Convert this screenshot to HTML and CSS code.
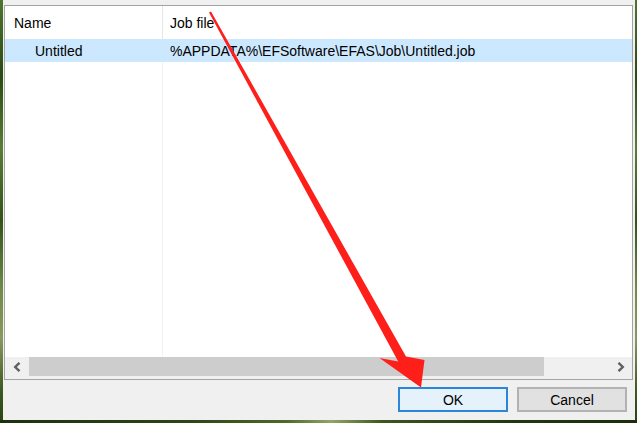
FILE: index.html
```html
<!DOCTYPE html>
<html>
<head>
<meta charset="utf-8">
<title>Jobs</title>
<link rel="stylesheet" href="styles.css">
</head>
<body>
<div class="dialog">
  <div class="list">
    <div class="header">
      <div class="cell name-col hname">Name</div>
      <div class="cell job-col">Job file</div>
    </div>
    <div class="row selected">
      <div class="cell name-col rname">Untitled</div>
      <div class="cell job-col">%APPDATA%\EFSoftware\EFAS\Job\Untitled.job</div>
    </div>
    <div class="rest">
      <div class="name-col"></div>
      <div class="job-col"></div>
    </div>
    <div class="hscroll">
      <div class="sbtn"><svg width="9" height="10" viewBox="0 0 9 10"><polyline points="6.5,0.8 2.2,5 6.5,9.2" fill="none" stroke="#606060" stroke-width="2.4"/></svg></div>
      <div class="track"><div class="thumb"></div></div>
      <div class="sbtn"><svg width="9" height="10" viewBox="0 0 9 10"><polyline points="2.5,0.8 6.8,5 2.5,9.2" fill="none" stroke="#606060" stroke-width="2.4"/></svg></div>
    </div>
  </div>
  <div class="footer">
    <button class="btn default">OK</button>
    <button class="btn">Cancel</button>
  </div>
</div>
<svg class="annot" width="637" height="423" viewBox="0 0 637 423">
  <polygon fill="#fe1f1a" points="211,11.4 406,356.6 424.5,360 421,387.5 379.5,358 398.2,361.4 209,12.6"/>
</svg>
</body>
</html>
```

FILE: styles.css
```css
html, body {
  margin: 0;
  padding: 0;
}
body {
  width: 637px;
  height: 423px;
  overflow: hidden;
  position: relative;
  font-family: "Liberation Sans", Arial, sans-serif;
  font-size: 14px;
  color: #000;
  background:
    linear-gradient(90deg, #1d300e 0%, #2c4616 30%, #4d6a2a 45%, #94a468 52%, #3b5620 60%, #22370f 80%, #1b2d0c 100%) bottom / 100% 3px no-repeat,
    linear-gradient(180deg, #4f7430 0%, #2c4a14 18%, #5a7d36 35%, #34521a 52%, #6f8a48 68%, #8a9860 80%, #3e5a22 92%, #2a4214 100%);
}
.dialog {
  box-sizing: border-box;
  width: 632px;
  height: 420px;
  margin-left: 3px;
  background: #f0f0f0;
  padding: 5px 2px 0 1px;
  display: flex;
  flex-direction: column;
}
.list {
  box-sizing: border-box;
  height: 375px;
  border: 1px solid #a3a3a3;
  background: #fff;
  display: flex;
  flex-direction: column;
}
.header, .row, .rest {
  display: flex;
}
.header {
  height: 33px;
  align-items: center;
}
.row {
  height: 23px;
  align-items: center;
}
.selected {
  background: #cce8ff;
}
.name-col {
  box-sizing: border-box;
  width: 158px;
  flex: none;
  height: 100%;
}
.job-col {
  flex: 1;
  box-sizing: border-box;
  padding-left: 7px;
  height: 100%;
}
.cell {
  display: flex;
  align-items: center;
  white-space: nowrap;
}
.header .name-col {
  border-right: 1px solid #e5e5e5;
}
.hname {
  padding-left: 9px;
}
.rname {
  padding-left: 30px;
  border-right: 1px solid transparent;
}
.rest {
  flex: 1;
}
.rest .name-col {
  border-right: 1px solid #f2f2f2;
}
.hscroll {
  height: 22px;
  display: flex;
  background: #f0f0f0;
}
.sbtn {
  width: 24px;
  height: 19px;
  display: flex;
  align-items: center;
  justify-content: center;
  flex: none;
}
.track {
  flex: 1;
  height: 19px;
  display: flex;
}
.thumb {
  width: 515px;
  height: 19px;
  background: #cdcdcd;
}
.footer {
  display: flex;
  justify-content: flex-end;
  gap: 9px;
  margin-top: 7px;
  padding-right: 6px;
}
.btn {
  box-sizing: border-box;
  width: 110px;
  height: 25px;
  font-family: "Liberation Sans", Arial, sans-serif;
  font-size: 14px;
  color: #000;
  background: #e1e1e1;
  border: 2px solid #b2b2b2;
  padding: 0;
  margin: 0;
}
.btn.default {
  background: #e5f1fb;
  border-color: #2a86d9;
}
.annot {
  position: absolute;
  left: 0;
  top: 0;
  pointer-events: none;
}
```
